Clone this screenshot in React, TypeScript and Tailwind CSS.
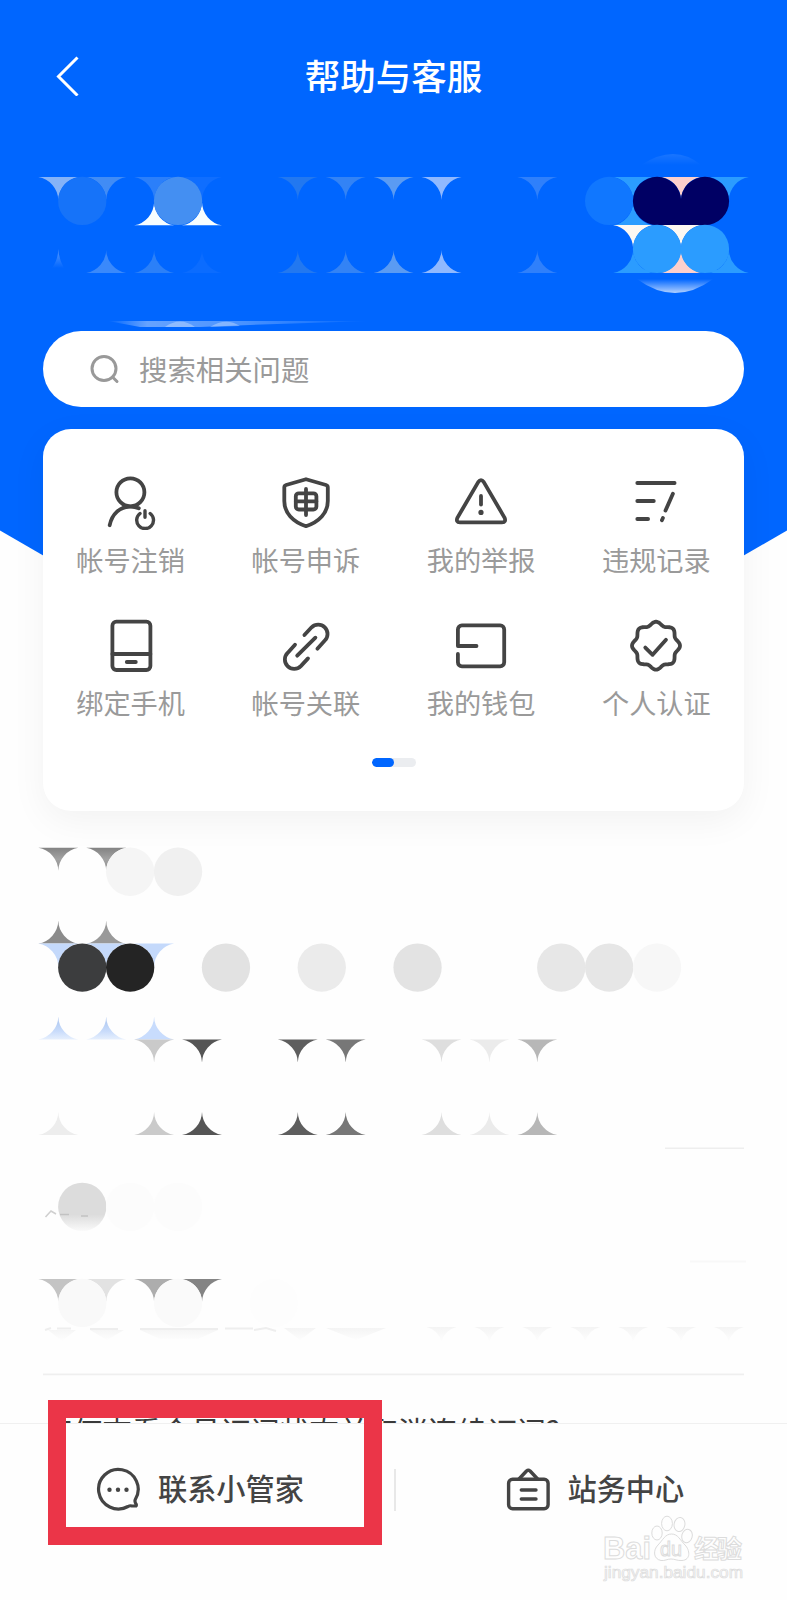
import React from 'react';

const INK = '#444444';
const STEP = 47.9;
const LEFT = 58.3;
const R = STEP / 2;

const vx = (k: number) => LEFT + k * STEP;

// "down" hangs from the row line, "up" stands on it, "dot" fills the cell below it
type Tile = { kind: 'down' | 'up' | 'dot'; k: number; y: number; fill: string };

const tile = (kind: Tile['kind'], y: number, cells: [number, string][]): Tile[] =>
  cells.map(([k, fill]) => ({ kind, k, y, fill }));

const Tiles: React.FC<{ items: Tile[] }> = ({ items }) => (
  <>
    {items.map((t, idx) => {
      const x = vx(t.k);
      if (t.kind === 'dot') {
        return <circle key={idx} cx={x + R} cy={t.y + R} r={R + 0.2} fill={t.fill} />;
      }
      const dir = t.kind === 'down' ? 1 : -1;
      const sweep = t.kind === 'down' ? 1 : 0;
      return (
        <path
          key={idx}
          fill={t.fill}
          d={`M${x - 20} ${t.y}A${R} ${R} 0 0 ${sweep} ${x} ${t.y + dir * 23}A${R} ${R} 0 0 ${sweep} ${x + 20} ${t.y}Z`}
        />
      );
    })}
  </>
);

const headerTiles: Tile[] = [
  ...tile('down', 177, [
    [0, '#85b3f8'], [1, '#418cf5'], [2, '#2b7ffa'], [3, '#0f6eff'], [5, '#2278f0'], [6, '#3383f5'],
    [7, '#5a9bf3'], [8, '#90b9ff'], [10, '#2f80fb'], [12, '#2b9cff'], [13, '#fdd0cd'], [14, '#2b9cff'],
  ]),
  ...tile('up', 225.3, [[2, '#f6fdff'], [3, '#f6fdff'], [12, '#2b9cff']]),
  ...tile('dot', 177, [[0, '#1673f9'], [2, '#448ff2'], [11, '#1077ff'], [12, '#000064'], [13, '#000064']]),
  ...tile('down', 225, [[12, '#fdf8f2'], [13, '#fdf8f2']]),
  ...tile('up', 273, [
    [1, '#3a89fb'], [2, '#2b80f8'], [3, '#0b6cff'], [5, '#2278f0'], [6, '#3383f5'], [7, '#5a9bf3'],
    [8, '#90b9ff'], [10, '#2f80fb'], [12, '#2b9cff'], [13, '#fdd0cd'], [14, '#2b9cff'],
  ]),
  ...tile('dot', 225, [[12, '#2b9cff'], [13, '#2b9cff']]),
];

const bodyTiles: Tile[] = [
  ...tile('down', 847.8, [[0, 'url(#cusp)'], [1, 'url(#cusp)']]),
  ...tile('dot', 847.8, [[1, '#f5f5f5'], [2, '#f0f0f0']]),
  ...tile('up', 943.6, [[0, '#8b8b8b'], [1, '#999999']]),
  ...tile('down', 943.6, [[0, '#c4d9fb'], [1, '#c4d9fb'], [2, '#c4d9fb']]),
  ...tile('dot', 943.6, [
    [0, '#3c3d3e'], [1, '#242424'], [3, '#e2e2e2'], [5, '#ebebeb'],
    [7, '#e3e3e3'], [10, '#e7e7e7'], [11, '#e6e6e6'], [12, '#f7f7f7'],
  ]),
  ...tile('up', 1039.4, [[0, 'url(#fade)'], [1, 'url(#fade)'], [2, '#c8dcfd']]),
  ...tile('down', 1039.6, [
    [2, '#cacaca'], [3, '#555555'], [5, '#5e5e5e'], [6, '#777777'], [8, '#dedede'], [9, '#ebebeb'], [10, '#b7b7b7'],
  ]),
  ...tile('up', 1135, [
    [0, '#ededed'], [2, '#cacaca'], [3, '#555555'], [5, '#5e5e5e'], [6, '#777777'],
    [8, '#dedede'], [9, '#ebebeb'], [10, '#b7b7b7'],
  ]),
  ...tile('dot', 1182.9, [[0, 'url(#ball)'], [1, '#fcfcfc'], [2, '#fcfcfc']]),
  ...tile('down', 1279, [[0, '#c4c4c4'], [1, '#e2e2e2'], [2, '#adadad'], [3, '#848484']]),
  ...tile('dot', 1279, [[0, '#f9f9f9'], [2, '#fafafa'], [4, '#fdfdfd']]),
];

const sealPath =
  Array.from({ length: 120 }, (_, i) => {
    const a = (i / 120) * Math.PI * 2;
    const r = 22.3 + 1.7 * Math.cos(8 * a);
    return `${i ? 'L' : 'M'}${(28 + r * Math.cos(a)).toFixed(2)} ${(28.7 + r * Math.sin(a)).toFixed(2)}`;
  }).join('') + 'Z';

const services = [
  {
    title: '帐号注销',
    icon: (
      <>
        <circle cx="27.4" cy="18.3" r="14" />
        <path d="M6.7 51.2C9 40 17 32.6 27.4 32.6c3 0 5.8.5 8.4 1.7" />
        <path d="M37 39.5a8.4 8.4 0 1 0 10.2 0M42 36.8v6.5" strokeWidth="3.4" />
      </>
    ),
  },
  {
    title: '帐号申诉',
    icon: (
      <>
        <path d="M28 5.2L48 11Q49.8 11.6 49.8 13.5V27C49.8 39 41 48 28 52.2C15 48 6.3 39 6.3 27V13.5Q6.3 11.6 8.1 11Z" />
        <rect x="17.8" y="19.3" width="20.6" height="16.2" rx="3" />
        <path d="M28 15v26M17.8 27.3h20.6" />
      </>
    ),
  },
  {
    title: '我的举报',
    icon: (
      <>
        <path d="M25.2 8.1Q28 4 30.8 8.1L51.5 43.6Q53.5 48.3 49 48.3H7Q2.5 48.3 4.5 43.6Z" />
        <path d="M28 22v8.5" />
        <circle cx="28" cy="38.4" r="2.6" fill={INK} stroke="none" />
      </>
    ),
  },
  {
    title: '违规记录',
    icon: <path d="M9.3 9H46.6M9.3 27h16.5M9.3 45h10.8M44.9 19.8l-7.4 16.8M34.9 44l-1 2.2" />,
  },
  {
    title: '绑定手机',
    icon: (
      <>
        <rect x="9.4" y="4.7" width="38" height="48.3" rx="4" />
        <path d="M9.4 37h38M23.8 45h9" />
      </>
    ),
  },
  {
    title: '帐号关联',
    icon: (
      <path d="M26.4 18L33.6 10.3A9.3 9.3 0 0 1 46.8 23.5L39.4 31.7M30 41.4L22.8 49.1A9.3 9.3 0 0 1 9.6 35.9L17 27.7M37.4 20.7L19.2 38.7" />
    ),
  },
  {
    title: '我的钱包',
    icon: (
      <path d="M23.5 29H4.9V12.4a4 4 0 0 1 4-4h38.3a4 4 0 0 1 4 4v32.9a4 4 0 0 1-4 4H8.9a4 4 0 0 1-4-4V37" />
    ),
  },
  {
    title: '个人认证',
    icon: (
      <>
        <path d={sealPath} />
        <path d="M17.3 30.6l7.3 7.2L38 22.8" />
      </>
    ),
  },
];

const Header: React.FC = () => (
  <header className="relative flex flex-col">
    <div className="absolute inset-x-0 top-0 h-[758px] bg-[#0066ff] [clip-path:polygon(0_0,100%_0,100%_530.5px,50%_758px,0_530.5px)]"></div>

    <div className="relative grid h-[130px] grid-cols-[1fr_auto_1fr] items-start text-white">
      <svg className="mt-14 ml-[54px] h-10 w-7" viewBox="0 0 28 40" fill="none" stroke="white" strokeWidth="3">
        <path d="M23.5 1.5L4.5 20.5L23.5 39.5" />
      </svg>
      <h1 className="mt-[49px] text-[35.5px] leading-[52px] font-medium">帮助与客服</h1>
      <span></span>
    </div>

    <svg className="relative block h-[201px] w-full" viewBox="0 130 787 201">
      <defs>
        <linearGradient id="moon" x1="0" y1="0" x2="0" y2="1">
          <stop offset="0" stopColor="#fff" stopOpacity="0" />
          <stop offset="1" stopColor="#fff" stopOpacity="0.7" />
        </linearGradient>
        <linearGradient id="glow" x1="0" y1="0" x2="0" y2="1">
          <stop offset="0" stopColor="#fff" stopOpacity="0.1" />
          <stop offset="1" stopColor="#fff" stopOpacity="0" />
        </linearGradient>
        <linearGradient id="spike" x1="0" y1="0" x2="0" y2="1">
          <stop offset="0" stopColor="#5a9bff" />
          <stop offset="1" stopColor="#0066ff" />
        </linearGradient>
        <linearGradient id="strip" x1="0" y1="0" x2="1" y2="0">
          <stop offset="0" stopColor="#fff" stopOpacity="0" />
          <stop offset="0.15" stopColor="#fff" stopOpacity="0.4" />
          <stop offset="0.5" stopColor="#fff" stopOpacity="0.3" />
          <stop offset="1" stopColor="#fff" stopOpacity="0" />
        </linearGradient>
      </defs>
      {/* backing under the paired tiles so their shared corners stay closed */}
      <path d="M657 201H705V225.3H657Z" fill="#000064" />
      <path d="M657 250H705V262L720 272H640L657 262Z" fill="#2b9cff" />
      <Tiles items={headerTiles} />
      <path d="M58.3 249Q58 260 52 268L64 268Q59 260 58.3 249Z" fill="url(#spike)" />
      <path d="M641 165Q675 143 701 165Z" fill="url(#glow)" />
      <path d="M637 279Q675 307 713 279Z" fill="url(#moon)" />
      <path d="M108 321H370L250 325L200 327H140Z" fill="url(#strip)" />
      <path d="M165 327Q180 316 195 327ZM210 327Q226 317 240 326Z" fill="#fff" fillOpacity="0.3" />
    </svg>

    <div className="relative mx-[43px] flex h-[76px] items-center rounded-full bg-white text-[#9a9a9a]">
      <svg className="ml-[46px] h-8 w-8" viewBox="0 0 32 32" fill="none" stroke="#999" strokeWidth="3" strokeLinecap="round">
        <circle cx="15" cy="15.5" r="12" />
        <path d="M23.5 24L28 28.5" />
      </svg>
      <span className="ml-[18px] text-[28.4px] leading-10">搜索相关问题</span>
    </div>
  </header>
);

const ServiceCard: React.FC = () => (
  <section className="relative mx-[43px] mt-[21.5px] h-[382.5px] rounded-[28px] bg-white pt-[45.5px] shadow-[0_10px_36px_rgba(0,0,0,0.05)]">
    <div className="grid grid-cols-4">
      {services.map((item) => (
        <div key={item.title} className="flex h-[143px] flex-col items-center">
          <svg
            className="h-14 w-14"
            viewBox="0 0 56 56"
            fill="none"
            stroke={INK}
            strokeWidth="3.8"
            strokeLinecap="round"
            strokeLinejoin="round"
          >
            {item.icon}
          </svg>
          <span className="mt-[9px] text-[27.2px] leading-10 text-[#9a9a9a]">{item.title}</span>
        </div>
      ))}
    </div>
    <div className="mx-auto -mt-[2px] flex h-[9px] w-11 overflow-hidden rounded-full bg-[#ebedf0]">
      <span className="w-[22px] rounded-full bg-[#0066ff]"></span>
    </div>
  </section>
);

const Articles: React.FC = () => (
  <section className="relative h-[612px] overflow-hidden">
    <svg className="block h-[600px] w-full" viewBox="0 811 787 600">
      <defs>
        <linearGradient id="cusp" x1="0" y1="0" x2="0" y2="1">
          <stop offset="0" stopColor="#838383" />
          <stop offset="0.5" stopColor="#a3a3a3" />
          <stop offset="1" stopColor="#8d8d8d" />
        </linearGradient>
        <linearGradient id="fade" x1="0" y1="0" x2="0" y2="1">
          <stop offset="0" stopColor="#a9c4ee" />
          <stop offset="0.65" stopColor="#c9dcfb" />
          <stop offset="1" stopColor="#e6effd" />
        </linearGradient>
        <linearGradient id="ball" x1="0" y1="0" x2="0" y2="1">
          <stop offset="0" stopColor="#dcdcdc" />
          <stop offset="0.66" stopColor="#dcdcdc" />
          <stop offset="1" stopColor="#fafafa" />
        </linearGradient>
        <linearGradient id="smudge" x1="0" y1="0" x2="0" y2="1">
          <stop offset="0" stopColor="#f4f4f4" />
          <stop offset="1" stopColor="#fefefe" />
        </linearGradient>
      </defs>
      <Tiles items={bodyTiles} />
      <path d="M45.5 1217L51 1211L56 1214" fill="none" stroke="#cfcfcf" strokeWidth="1.5" />
      <path d="M60 1214.5h9M81 1216h7" stroke="#c2c2c2" strokeWidth="1.5" />
      <path d="M665 1148.3H744" stroke="#eeeeee" strokeWidth="1.5" />
      <path d="M690 1261.5H746" stroke="#f8f8f8" strokeWidth="2" />
      <path d="M45 1330l6-2M57 1328.5h14M90 1329h28M140 1329h78M225 1328.5h28M254 1330l12-2l10 3" fill="none" stroke="#eeeeee" strokeWidth="2" />
      <path d="M48 1330h28l-14 11ZM90 1330h34l-17 10ZM140 1330h78l-20 9h-38ZM284 1328h32l-16 12ZM326 1328h60l-30 12Z" fill="url(#smudge)" />
      {[8, 9, 10, 11, 12, 13, 14].map((k) => (
        <path key={k} d={`M${vx(k) - 15} 1327h30q-12 3-15 15q-3-12-15-15Z`} fill="url(#smudge)" />
      ))}
      <path d="M43 1374.3H744" stroke="#efefef" strokeWidth="1.7" />
    </svg>
    <p className="ml-[43px] whitespace-nowrap text-[29.6px] leading-10 text-[#3a3a3a]">
      如何查看会员订阅状态并取消连续订阅?
    </p>
  </section>
);

const Watermark: React.FC = () => (
  <svg
    className="absolute right-[37px] bottom-4 h-[72px] w-[152px]"
    viewBox="598 1512 152 72"
    fill="#fefefe"
    stroke="#dcdcdc"
    strokeWidth="1"
    fontFamily="'Liberation Sans', 'Noto Sans CJK SC', sans-serif"
  >
    <ellipse cx="657" cy="1533" rx="5.2" ry="7" />
    <ellipse cx="667" cy="1523.5" rx="5.4" ry="7.3" />
    <ellipse cx="679.5" cy="1524.5" rx="5.4" ry="7" transform="rotate(10 679.5 1524.5)" />
    <ellipse cx="687" cy="1536" rx="5.2" ry="6.8" transform="rotate(15 687 1536)" />
    <path d="M671.5 1534C678 1534 680 1540 685 1545C690 1550 691 1560 682 1560.5C677 1560.8 675 1559 671 1559C667 1559 665 1561 661 1560.5C653 1559 653 1550 658 1545C663 1540 665 1534 671.5 1534Z" />
    <text x="603" y="1559" fontSize="32" fontWeight="700" textLength="48" lengthAdjust="spacingAndGlyphs">Bai</text>
    <text x="660" y="1556" fontSize="20" textLength="22" lengthAdjust="spacingAndGlyphs">du</text>
    <text x="694" y="1558" fontSize="25" fontWeight="700" fontFamily="'Noto Sans CJK SC', sans-serif" textLength="48">经验</text>
    <text x="604" y="1577.5" fontSize="17" strokeWidth="0.7" fill="#f8f8f8" textLength="139" lengthAdjust="spacingAndGlyphs">
      jingyan.baidu.com
    </text>
  </svg>
);

const BottomBar: React.FC = () => (
  <footer className="relative flex h-[177px] border-t border-[#f0f0f0] bg-[#fefefe] text-[29.2px] font-medium text-[#444]">
    <div className="flex h-[130px] w-[393.5px] shrink-0 items-center pl-[94px]">
      <svg className="h-12 w-12" viewBox="94 1465 48 48" fill="none" stroke={INK} strokeWidth="3.2" strokeLinecap="round" strokeLinejoin="round">
        <path d="M135.4 1499.3A19.8 19.8 0 1 0 128 1506.5Q130 1505.3 132 1506H135.5Q136.6 1506 136.3 1504.5Q134.2 1501.5 135.4 1499.3Z" />
        <g fill={INK} stroke="none">
          <circle cx="109.5" cy="1489.7" r="2.2" />
          <circle cx="118" cy="1489.7" r="2.2" />
          <circle cx="126.5" cy="1489.7" r="2.2" />
        </g>
      </svg>
      <span className="-mt-[4px] ml-[16px] leading-10 whitespace-nowrap">联系小管家</span>
    </div>
    <span className="mt-[45px] h-[42px] w-[2px] bg-[#e8e8e8]"></span>
    <div className="flex h-[130px] flex-1 items-center pl-[108px]">
      <svg className="h-12 w-12" viewBox="504 1465 48 48" fill="none" stroke={INK} strokeWidth="3.4" strokeLinecap="round" strokeLinejoin="round">
        <rect x="508.6" y="1479.3" width="39.5" height="29.5" rx="4" />
        <path d="M519 1479L526.5 1471Q528.3 1469.5 530.1 1471L537.6 1479M521.3 1490h14.7M521.3 1499h14.7" />
      </svg>
      <span className="-mt-[4px] ml-[16px] leading-10 whitespace-nowrap">站务中心</span>
    </div>
    <div className="pointer-events-none absolute -top-[24px] left-12 h-[145px] w-[334px] border-[18px] border-[#eb3548]"></div>
    <Watermark />
  </footer>
);

const App: React.FC = () => {
  return (
    <main className="h-[1600px] w-[787px] overflow-hidden bg-[#fefefe] font-['Noto_Sans_CJK_SC',sans-serif]">
      <Header />
      <ServiceCard />
      <Articles />
      <BottomBar />
    </main>
  );
};

export default App;
